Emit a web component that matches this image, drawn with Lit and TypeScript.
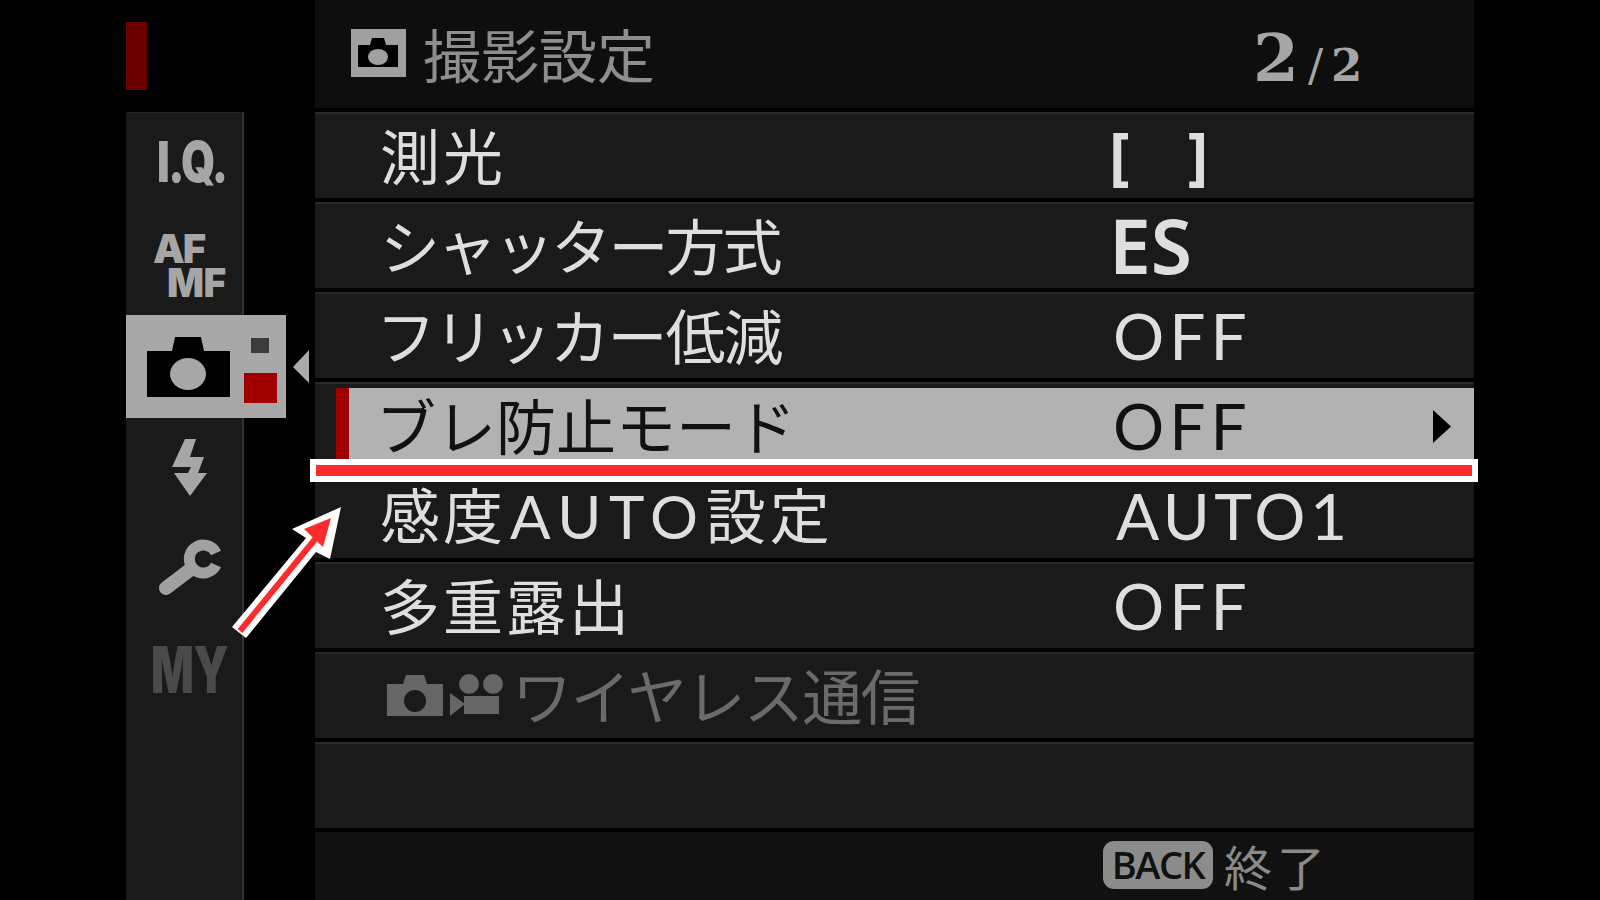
import { LitElement, html, css, svg } from "lit";
import { customElement } from "lit/decorators.js";

const ROWS = [
  { label: "測光", value: "[ ]", cls: "brackets", lc: "wide" },
  { label: "シャッター方式", value: "ES", cls: "bold", lc: "tighter" },
  { label: "フリッカー低減", value: "OFF", cls: "", lc: "tight pull" },
  { label: "ブレ防止モード", value: "OFF", cls: "", lc: "pull", sel: true },
  { label: "感度AUTO設定", value: "AUTO1", cls: "auto", lc: "" },
  { label: "多重露出", value: "OFF", cls: "", lc: "wide" },
];

@customElement("app-root")
export class AppRoot extends LitElement {
  static styles = css`
    :host {
      display: block;
      position: relative;
      width: 1600px;
      height: 900px;
      overflow: hidden;
      background: #000;
      font-family: "Noto Sans CJK JP", sans-serif;
    }
    .stage { display: flex; width: 1348px; height: 900px; margin-left: 126px; }
    .side { width: 189px; display: flex; flex-direction: column; flex: none; }
    .indicator-wrap { height: 112px; padding-top: 22px; box-sizing: border-box; flex: none; }
    .indicator { width: 21px; height: 68px; background: #6a0000; }
    .nav {
      width: 118px; flex: 1; box-sizing: border-box;
      background: #1a1a1a; border-right: 2px solid #333; border-top: 1px solid #262626;
    }
    .tab { height: 101px; display: flex; flex-direction: column; align-items: flex-start; }
    .tab svg { display: block; overflow: visible; }
    .tab.active { width: 160px; height: 103px; background: #a8a8a8; }
    .t { font-family: "Inter", "Liberation Sans", sans-serif; font-weight: 900; color: #a6a6a6; line-height: 1; transform-origin: left center; }
    .iq { font-size: 56px; margin: 21px 0 0 31px; transform: scaleX(0.78); letter-spacing: -2px; }
    .af { font-size: 40px; margin: 18px 0 0 27px; line-height: 34px; letter-spacing: -2px; }
    .mf { font-size: 40px; margin: 0 0 0 41px; line-height: 34px; letter-spacing: -0.5px; transform: scaleX(0.97); }
    .my { font-size: 64px; margin: 18px 0 0 25px; color: #4a4a4a; transform: scaleX(0.7); }
    .main { flex: 1; display: flex; flex-direction: column; gap: 4px; }
    .header {
      height: 108px; flex: none; background: #0e0e0e; display: flex; align-items: center;
      color: #8e8e8e; padding-left: 36px; box-sizing: border-box;
    }
    .header svg { flex: none; margin-right: 17px; margin-top: -2px; }
    .title { font-size: 58px; line-height: 1; width: 830px; margin-top: -3px; }
    .page { font-family: "DejaVu Serif", serif; font-weight: 700; color: #a6a6a6; line-height: 1; display: flex; align-items: baseline; margin-top: 8px; }
    .page b { font-size: 66px; font-weight: 700; }
    .page span { font-size: 45px; margin-left: 9px; }
    .page i { font-style: normal; font-weight: 400; margin-right: 8px; }
    .row {
      height: 86px; flex: none; box-sizing: border-box; background: #1a1a1a; border-top: 2px solid #2a2a2a;
      display: flex; align-items: center; padding-left: 65px; color: #dedede;
    }
    .row.sel {
      color: #111; border-top-color: #2a2a2a;
      background:
        linear-gradient(#a00000, #a00000) 21px 4px / 13px 80px no-repeat,
        linear-gradient(#b2b2b2, #b2b2b2) 34px 4px / 100% 80px no-repeat,
        #1a1a1a;
    }
    .label { width: 733px; font-size: 60px; line-height: 1; white-space: nowrap; flex: none; margin-top: -4px; box-sizing: border-box; }
    .label.wide { letter-spacing: 3px; }
    .label.tight { letter-spacing: -2.1px; }
    .label.tighter { letter-spacing: -2.9px; }
    .label.pull { text-indent: -4px; }
    .label .ka { letter-spacing: 3px; }
    .label em { font-family: "Lato", sans-serif; font-style: normal; letter-spacing: 7.6px; margin: 0 0 0 4px; }
    .label .st { letter-spacing: 4px; }
    .value { flex: 1; font-family: "Lato", sans-serif; font-size: 64px; line-height: 1; letter-spacing: 5px; }
    .value.auto { margin-left: 3px; letter-spacing: 4.4px; }
    .value.bold { font-family: "Noto Sans", sans-serif; font-weight: 600; font-size: 75px; letter-spacing: 0; margin-left: -4px; margin-top: -2px; }
    .value.brackets { font-family: "Open Sans", sans-serif; font-weight: 700; font-size: 62px; word-spacing: 42px; letter-spacing: 0; margin-left: -4px; margin-top: -5px; }
    .arrow { flex: none; margin-right: 23px; }
    .row.off { color: #6a6a6a; padding-left: 72px; }
    .row.off svg { flex: none; margin-right: 9px; }
    .row.off .label { width: auto; letter-spacing: -1.6px; }
    .footer {
      flex: 1; background: #111; display: flex; align-items: center;
      padding-left: 788px; color: #8a8a8a;
    }
    .back {
      font-family: "Open Sans", sans-serif; font-weight: 600; font-size: 38px; line-height: 46px; height: 48px;
      width: 110px; text-align: center; letter-spacing: -1.5px; background: #8c8c8c; color: #111; border-radius: 11px; flex: none;
      margin-top: -2px;
    }
    .end { font-size: 48px; margin-left: 11px; letter-spacing: 5px; line-height: 1; margin-top: -3px; }
    .annot { position: absolute; left: 0; top: 0; pointer-events: none; }
  `;

  private nav() {
    return html`
      <div class="nav">
        <div class="tab"><div class="t iq">I.Q.</div></div>
        <div class="tab"><div class="t af">AF</div><div class="t mf">MF</div></div>
        <div class="tab active">
          <svg width="160" height="103" viewBox="126 314 160 103">
            <path fill="#000" d="M147 350H172L175 336H201L204 350H230V396H147Z" />
            <ellipse cx="188" cy="373" rx="18" ry="16" fill="#a8a8a8" />
            <rect x="251" y="337" width="18" height="15" fill="#3c3c3c" />
            <rect x="244" y="372" width="33" height="30" fill="#a00000" />
            <polygon points="293,366 309,349 309,382" fill="#aaa" />
          </svg>
        </div>
        <div class="tab">
          <svg width="117" height="101" viewBox="126 417 117 101">
            <polygon fill="#a6a6a6" points="185,438 196,438 190,456 204,456 198,472 207,472 190,495 174,472 188,472 191,466 172,466" />
          </svg>
        </div>
        <div class="tab">
          <svg width="117" height="101" viewBox="126 518 117 101">
            <path fill="none" stroke="#a0a0a0" stroke-width="11" d="M216 552A14 14 0 1 0 216 564" />
            <path fill="none" stroke="#a0a0a0" stroke-width="14" stroke-linecap="round" d="M191 568L166 587" />
          </svg>
        </div>
        <div class="tab"><div class="t my">MY</div></div>
      </div>
    `;
  }

  private headerIcon() {
    return html`<svg width="55" height="48" viewBox="351 32 55 48">
      <rect x="351" y="32" width="55" height="48" fill="#a0a0a0" />
      <path fill="#000" d="M358 48H370L372 41H384L386 48H398V70H358Z" />
      <ellipse cx="378" cy="60" rx="10" ry="8" fill="#a0a0a0" />
    </svg>`;
  }

  private offIcon() {
    return html`<svg width="116" height="44" viewBox="387 676 116 44">
      <path fill="#666" d="M387 686H403L406 677H424L427 686H443V718H387Z" />
      <circle cx="415" cy="703" r="11" fill="#1a1a1a" />
      <circle cx="469" cy="686" r="10" fill="#666" />
      <circle cx="493" cy="686" r="10" fill="#666" />
      <rect x="464" y="698" width="35" height="18" fill="#666" />
      <polygon points="450,695 450,718 465,706" fill="#666" />
    </svg>`;
  }

  private annotation() {
    return svg`
      <polygon fill="#fff" points="310,459 1478,459 1478,482 310,482" />
      <rect x="316" y="465" width="1156" height="11" fill="#ff2a2a" />
      <polygon fill="#fff" points="232,627 246,638 316,552 330,559 341,507 292,529 306,538" />
      <path stroke="#ff2a2a" stroke-width="6" fill="none" d="M240 631L316 538" />
      <polygon fill="#ff2a2a" points="331,518 304,529 323,547" />
    `;
  }

  render() {
    return html`
      <div class="stage">
        <div class="side">
          <div class="indicator-wrap"><div class="indicator"></div></div>
          ${this.nav()}
        </div>
        <div class="main">
          <div class="header">
            ${this.headerIcon()}
            <div class="title">撮影設定</div>
            <div class="page"><b>2</b><span><i>/</i>2</span></div>
          </div>
          ${ROWS.map(
            (r) => html`
              <div class="row ${r.sel ? "sel" : ""}">
                <div class="label ${r.lc}">${r.label === "感度AUTO設定"
                  ? html`<span class="ka">感度</span><em>AUTO</em><span class="st">設定</span>`
                  : r.label}</div>
                <div class="value ${r.cls}">${r.value}</div>
                ${r.sel
                  ? html`<svg class="arrow" width="18" height="33" viewBox="0 0 18 33"><polygon points="0,0 18,16.5 0,33" fill="#000" /></svg>`
                  : ""}
              </div>
            `
          )}
          <div class="row off">${this.offIcon()}<div class="label">ワイヤレス通信</div></div>
          <div class="row"></div>
          <div class="footer">
            <div class="back">BACK</div>
            <div class="end">終了</div>
          </div>
        </div>
      </div>
      <svg class="annot" width="1600" height="900" viewBox="0 0 1600 900">${this.annotation()}</svg>
    `;
  }
}
